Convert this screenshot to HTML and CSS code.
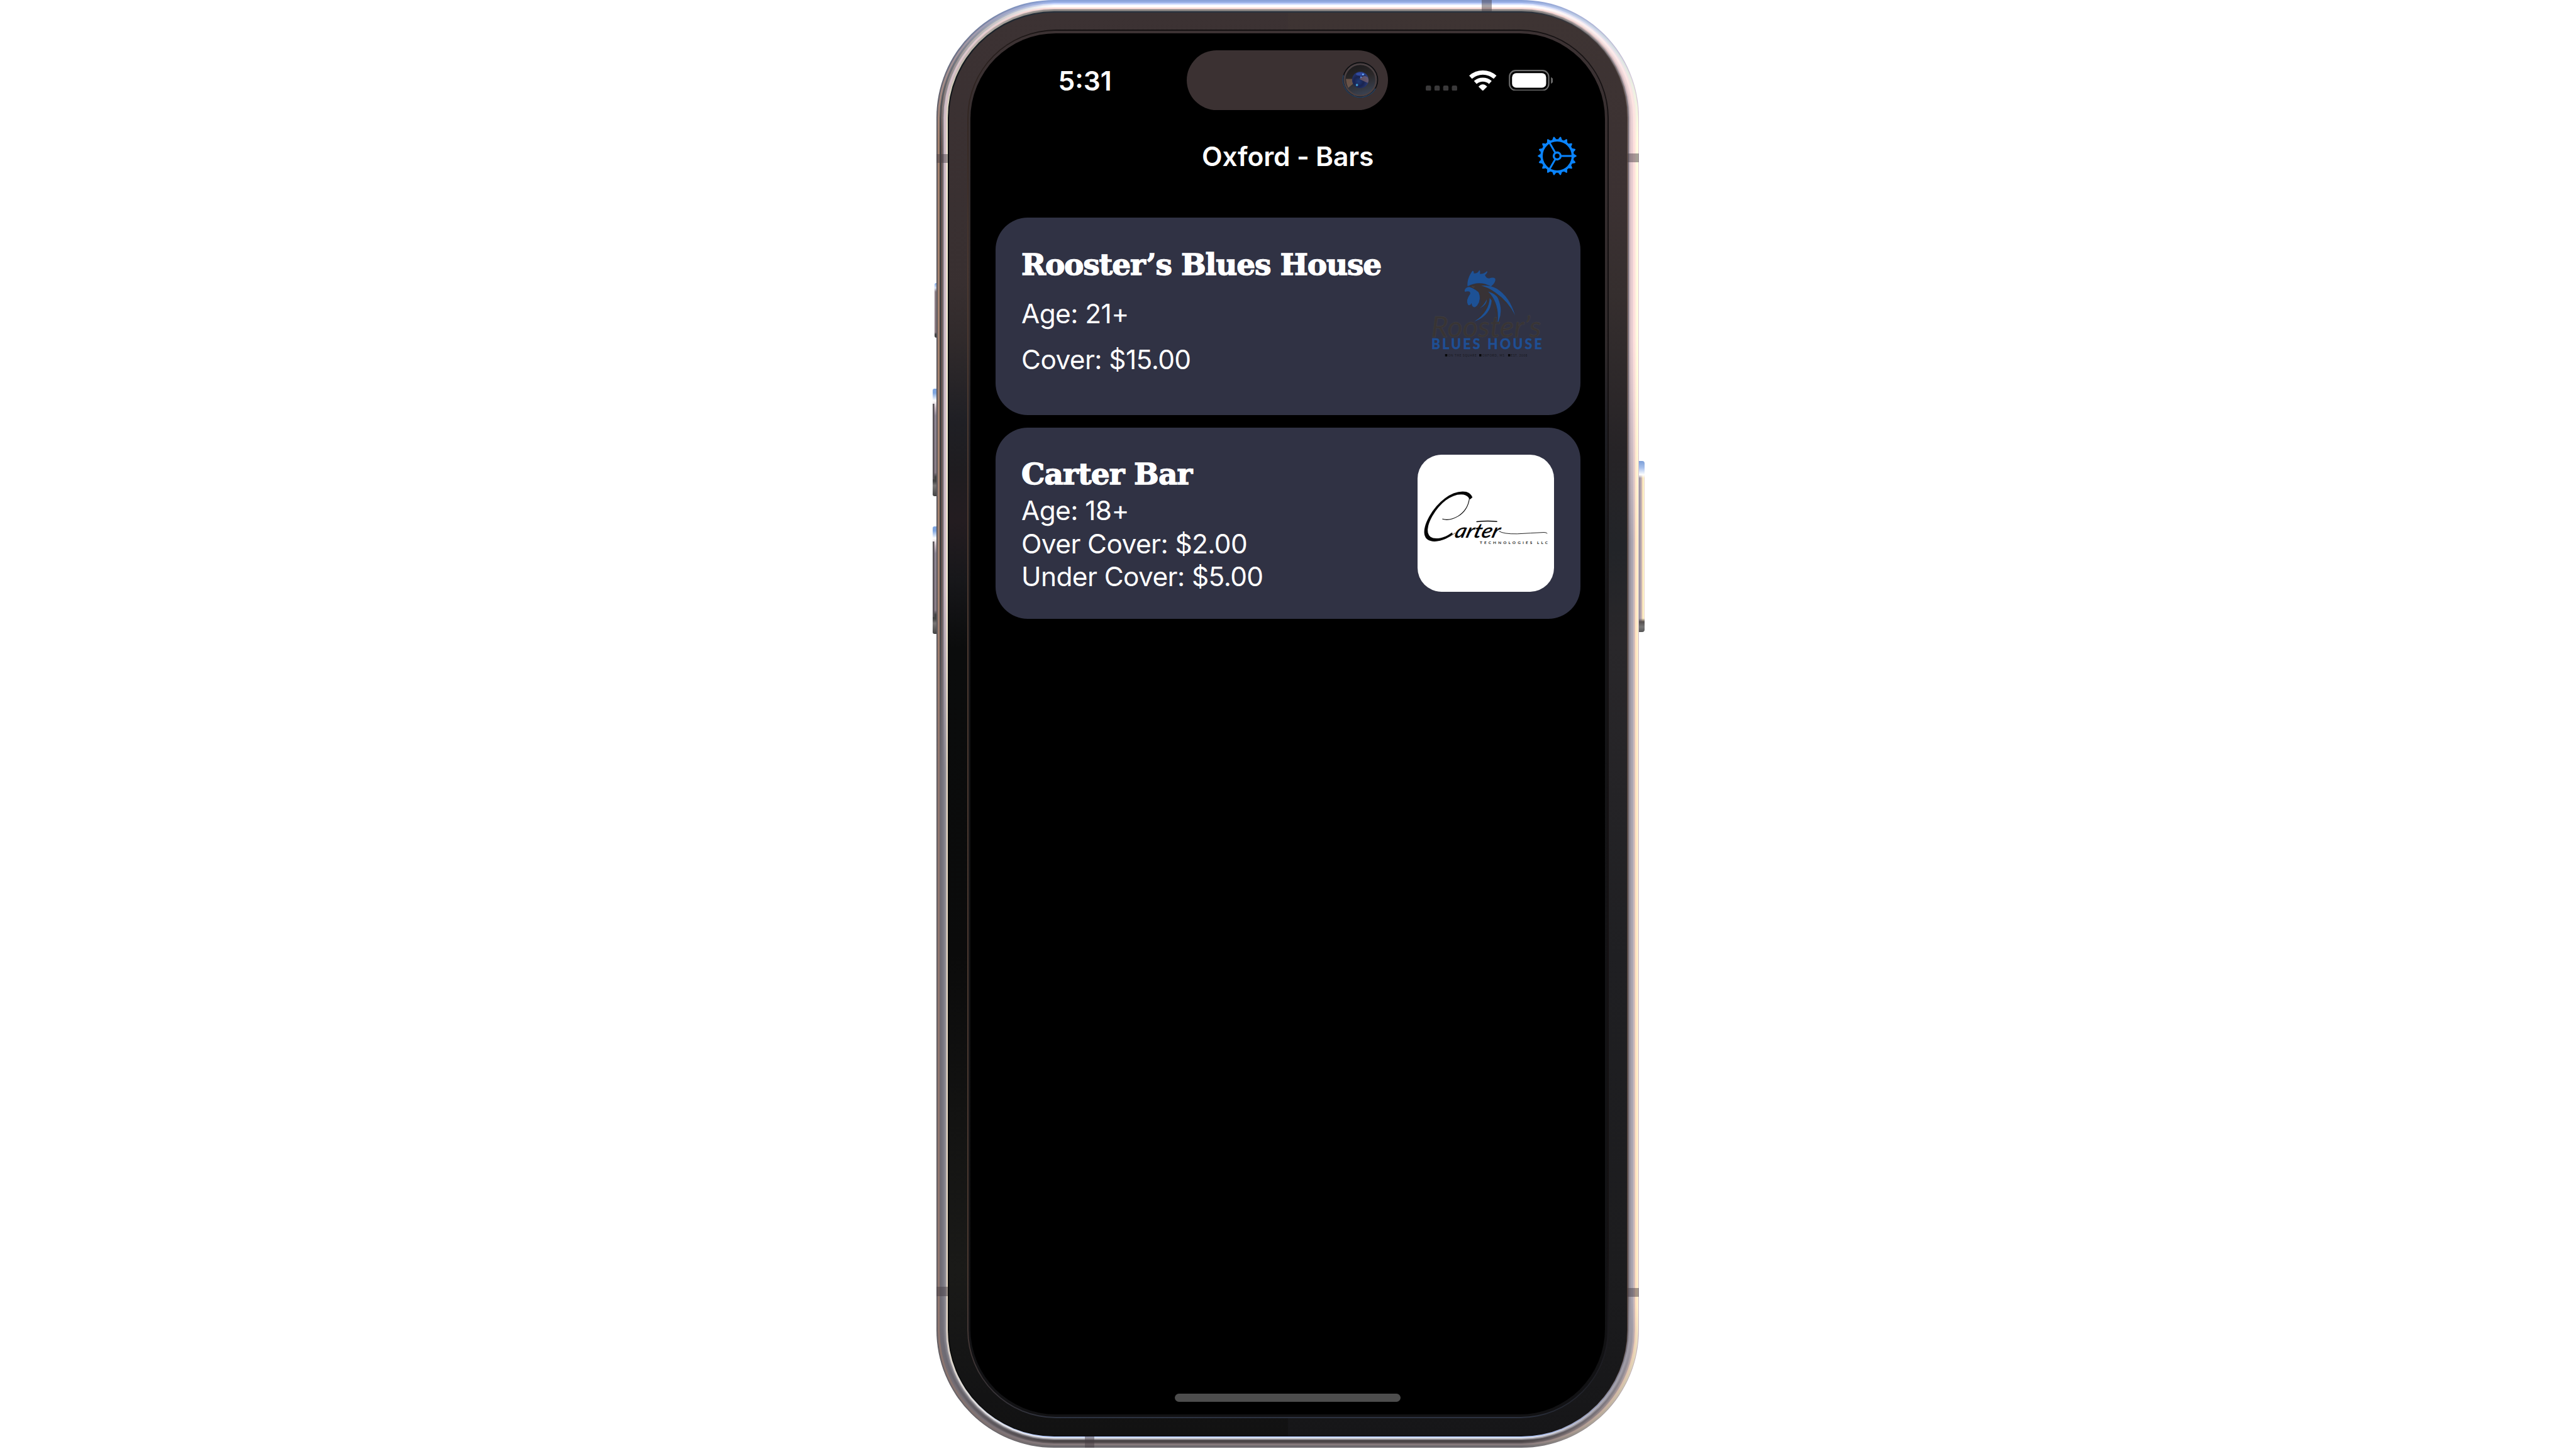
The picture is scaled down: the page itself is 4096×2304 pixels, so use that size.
FILE: index.html
```html
<!DOCTYPE html>
<html lang="en">
<head>
<meta charset="utf-8">
<title>Oxford - Bars</title>
<link rel="stylesheet" href="styles.css">
</head>
<body>
<main class="phone">
  <div class="frame" aria-hidden="true">
    <i class="button action"></i><i class="button vol-up"></i><i class="button vol-down"></i><i class="button power"></i>
    <i class="ring r0"></i><i class="ring r1"></i><i class="ring r2"></i><i class="ring r3"></i><i class="ring r4"></i><i class="ring r5"></i><i class="ring r6"></i><i class="ring r7"></i><i class="ring r8"></i><i class="ring r9"></i><i class="ring r10"></i><i class="ring r11"></i>
    <i class="antenna a-left-top"></i><i class="antenna a-right-top"></i><i class="antenna a-left-low"></i><i class="antenna a-right-low"></i><i class="antenna a-top"></i><i class="antenna a-bottom"></i>
    <i class="ring r12"></i>
    <i class="bezel"></i><i class="seam"></i><i class="seam-inner"></i>
  </div>
  <div class="screen">
    <div class="status">
      <span class="time">5:31</span>
      <div class="island">
        <svg class="camera" viewBox="-56 -56 112 112">
          <defs>
            <linearGradient id="cone" x1=".3" y1="0" x2=".6" y2="1"><stop offset="0" stop-color="#1b1a1c"/><stop offset=".45" stop-color="#2b2829"/><stop offset="1" stop-color="#3a4354"/></linearGradient>
            <radialGradient id="lens" cx=".4" cy=".6" r=".65"><stop offset="0" stop-color="#1f3a78"/><stop offset=".45" stop-color="#1a2450"/><stop offset="1" stop-color="#2a3f80"/></radialGradient>
          </defs>
          <circle r="53" fill="#0e0f12"/>
          <path d="M-50 -14A52 52 0 0 0 45 26" fill="none" stroke="#26405f" stroke-width="3"/>
          <circle r="47" fill="url(#cone)" stroke="#4a4042" stroke-width="5"/>
          <path d="M-43 -3H-22L-22 12L-36 24Q-42 12 -43 -3Z" fill="#8a6a58" opacity=".65"/>
          <circle r="24.500" fill="url(#lens)"/>
          <path d="M-3 -3Q12 -16 22 -8Q27 4 22 9Q8 3 -3 -3Z" fill="#8f6f72" opacity=".6"/>
          <ellipse cy="-17" rx="13" ry="5" fill="#3049a0"/>
          <circle cx="8" cy="-16" r="2.500" fill="#6fb4ff"/><circle cx="2" cy="-8" r="2.500" fill="#5b84d8"/><circle cx="-10" cy="15" r="3.500" fill="#3f9bd0"/>
        </svg>
      </div>
      <div class="indicators">
        <svg class="dots" viewBox="0 0 94 16" fill="#3a393a"><rect width="16" height="16" rx="4.500"/><rect x="26" width="16" height="16" rx="4.500"/><rect x="52" width="16" height="16" rx="4.500"/><rect x="78" width="16" height="16" rx="4.500"/></svg>
        <svg class="wifi" viewBox="0 0 183 137"><path d="M9.500 45.400A123 123 0 0 1 173.500 45.400" fill="none" stroke="#fff" stroke-width="28"/><path d="M41.100 80.800A75.500 75.500 0 0 1 141.900 80.800" fill="none" stroke="#fff" stroke-width="27"/><path d="M91.500 136L63.500 108Q91.500 80 119.500 108Z" fill="#fff" stroke="#fff" stroke-width="2" stroke-linejoin="round"/></svg>
        <svg class="battery" viewBox="0 0 297 142"><rect x="5" y="5" width="262" height="132" rx="42" fill="none" stroke="#6b6b6b" stroke-width="9"/><rect x="22" y="22" width="228" height="98" rx="28" fill="#fff"/><path d="M282 49Q297 55 297 71T282 93Z" fill="#6b6b6b"/></svg>
      </div>
    </div>
    <header class="navbar">
      <h1 class="nav-title">Oxford - Bars</h1>
      <svg class="gear" viewBox="-58 -58 116 116">
        <defs><path id="tooth" d="M46 -6.500Q51 -6 57 -1.600Q58.500 0 57 1.600Q51 6 46 6.500Z"/></defs>
        <g fill="#0a84ff">
          <use href="#tooth"/><use href="#tooth" transform="rotate(20)"/><use href="#tooth" transform="rotate(40)"/><use href="#tooth" transform="rotate(60)"/><use href="#tooth" transform="rotate(80)"/><use href="#tooth" transform="rotate(100)"/><use href="#tooth" transform="rotate(120)"/><use href="#tooth" transform="rotate(140)"/><use href="#tooth" transform="rotate(160)"/><use href="#tooth" transform="rotate(180)"/><use href="#tooth" transform="rotate(200)"/><use href="#tooth" transform="rotate(220)"/><use href="#tooth" transform="rotate(240)"/><use href="#tooth" transform="rotate(260)"/><use href="#tooth" transform="rotate(280)"/><use href="#tooth" transform="rotate(300)"/><use href="#tooth" transform="rotate(320)"/><use href="#tooth" transform="rotate(340)"/>
        </g>
        <g fill="none" stroke="#0a84ff"><circle r="46.500" stroke-width="7"/><circle r="10.200" stroke-width="6.400"/><path d="M12 0H46M-6 10.400L-23 39.800M-6 -10.400L-23 -39.800" stroke-width="5.600"/></g>
      </svg>
    </header>
    <section class="bars">
      <article class="card card-rooster">
        <div class="info">
          <h2 class="name">Rooster’s Blues House</h2>
          <p class="line">Age: 21+</p>
          <p class="line">Cover: $15.00</p>
        </div>
        <svg class="logo" viewBox="172.500 253 1063.600 1029" preserveAspectRatio="none">
          <path fill="#383235" d="M568 547Q620 512 690 524L745 545Q870 600 933 762Q860 650 722 582Q795 660 798 815Q780 700 730 628L728 665Q705 750 615 806Q690 745 712 640Q690 700 633 714Q682 680 664 640Q665 580 610 560Z"/>
          <g fill="#1d5195">
            <path d="M562 542C558 500 575 460 600 427Q612 424 611 446Q642 448 654 421Q664 430 658 449Q688 452 714 428Q722 440 698 458Q705 482 730 484Q762 472 778 485Q785 512 745 544Q655 495 564 542Z"/>
            <path d="M540 582Q538 550 575 547Q618 560 648 588Q672 640 637 687Q614 711 598 690L592 668Q586 691 566 682Q545 650 583 600Q586 578 560 581Q548 585 540 582Z"/>
            <path d="M668 538Q730 530 790 560Q890 620 933 762Q880 655 780 590Q725 550 668 538Z"/>
            <path d="M722 582Q780 600 798 630Q845 730 796 820Q815 670 722 582Z"/>
            <path d="M735 630L750 650Q740 765 612 808Q730 740 735 630Z"/>
            <path d="M712 640Q716 680 655 710Q695 680 712 640Z"/>
          </g>
          <path d="M598 541Q600 553 616 546" fill="none" stroke="#5a5556" stroke-width="3"/>
          <text class="rooster-script" x="278" y="925" textLength="858" lengthAdjust="spacingAndGlyphs">Rooster’s</text>
          <text class="rooster-sub" x="280" y="1017" textLength="862">BLUES HOUSE</text>
          <g fill="#08080a"><path d="M387 1053h17v17h-17zM653 1053h17v17h-17zM878 1053h17v17h-17z"/></g>
          <g class="rooster-tag"><text x="411" y="1070" textLength="220">ON THE SQUARE</text><text x="677" y="1070" textLength="172">OXFORD, MS</text><text x="901" y="1070" textLength="126">EST. 2008</text></g>
        </svg>
      </article>
      <article class="card card-carter">
        <div class="info">
          <h2 class="name">Carter Bar</h2>
          <p class="line">Age: 18+</p>
          <p class="line">Over Cover: $2.00</p>
          <p class="line">Under Cover: $5.00</p>
        </div>
        <svg class="logo logo-white" viewBox="138 103 1222 1227" preserveAspectRatio="none">
          <text class="carter-cap" transform="translate(92 874) skewX(-29)" textLength="345" lengthAdjust="spacingAndGlyphs">C</text>
          <text class="carter-script" transform="translate(462 850) skewX(-16)" textLength="400" lengthAdjust="spacingAndGlyphs">arter</text>
          <g fill="none" stroke="#050505" stroke-linecap="round">
            <path d="M290 878Q380 875 475 805" stroke-width="4"/>
            <path d="M603 490Q590 600 500 655Q420 700 362 680" stroke-width="6"/>
            <path d="M870 790Q905 815 1030 813Q1150 806 1270 800Q1290 800 1298 808" stroke-width="5"/>
            <path d="M668 704Q760 694 848 702" stroke-width="8"/>
          </g>
          <text class="carter-sub" x="696" y="905" textLength="608">TECHNOLOGIES LLC</text>
        </svg>
      </article>
    </section>
    <div class="home"></div>
  </div>
</main>
</body>
</html>
```
FILE: styles.css
```css
* { box-sizing: border-box; margin: 0; padding: 0; }
html, body { width: 4096px; height: 2304px; overflow: hidden; background: #fff; }
body { display: flex; justify-content: center; padding-right: 1px; font-family: "Inter", "Liberation Sans", sans-serif; color: #fff; }

.phone { position: relative; width: 1117px; height: 2302px; padding: 52.5px 54px 53px; }
.frame { position: absolute; inset: 0; }
.frame i { position: absolute; display: block; }

/* metal edge: concentric bands, one colour per side, blended round the corners */
.ring {
  inset: var(--d);
  border-radius: calc(187px - var(--d));
  background: conic-gradient(var(--t) 0deg 18deg, var(--ru) 31deg 42deg, var(--rl) 62deg 149deg, var(--b) 162deg 198deg, var(--ll) 211deg 262deg, var(--lu) 292deg 329deg, var(--t) 342deg 360deg);
}
.r0 { --d: 0px; --t: #8aa2d8; --ru: #e2cbd6; --rl: #d0bcc6; --b: #6b696d; --ll: #625d62; --lu: #5d585c; }
.r1 { --d: 1.5px; --t: #90a8dd; --ru: #ffffe0; --rl: #ffeecb; --b: #6f6b6f; --ll: #8c7570; --lu: #a5826f; }
.r2 { --d: 3px; --t: #a0b5ea; --ru: #ffffe0; --rl: #ffeec4; --b: #756f72; --ll: #93786f; --lu: #a5826f; }
.r3 { --d: 4.500px; --t: #c0cffa; --ru: #ffefe0; --rl: #ffe0c0; --b: #86797b; --ll: #706a70; --lu: #454443; }
.r4 { --d: 6px; --t: #dde6ff; --ru: #ffe4dc; --rl: #e8c6ba; --b: #7d7275; --ll: #6e6b74; --lu: #404040; }
.r5 { --d: 7.500px; --t: #ffffff; --ru: #ffdfdc; --rl: #c8b8ba; --b: #5a5254; --ll: #73707a; --lu: #80605a; }
.r6 { --d: 9px; --t: #ffffff; --ru: #f2d5d6; --rl: #b4aeb6; --b: #4a4345; --ll: #76747e; --lu: #6a6568; }
.r7 { --d: 10.500px; --t: #fff4f2; --ru: #e8cdd0; --rl: #aaa4b0; --b: #4c4648; --ll: #7d7b85; --lu: #a89aa4; }
.r8 { --d: 12px; --t: #ffdfda; --ru: #e4c8cd; --rl: #a5a0aa; --b: #666366; --ll: #85838c; --lu: #cbb8c4; }
.r9 { --d: 13.500px; --t: #c8b5b2; --ru: #d6bec4; --rl: #9a95a0; --b: #aaa8b0; --ll: #8b8890; --lu: #d0bcc6; }
.r10 { --d: 15px; --t: #8a8684; --ru: #b0a0a8; --rl: #8a848e; --b: #ffffff; --ll: #c5bab4; --lu: #e8d8d0; }
.r11 { --d: 16.500px; --t: #777473; --ru: #7a7078; --rl: #6f6568; --b: #b4c8f8; --ll: #fff0cf; --lu: #ffffd8; }
.r12 { --d: 18px; --t: #27313d; --ru: #5a4538; --rl: #4a382e; --b: #0a0a0a; --ll: #0a0b0b; --lu: #0c0d10; }

.bezel {
  inset: 19.500px;
  border-radius: 167.5px;
  background:
    linear-gradient(#3c3233 0, #382f30 430px, #302a2b 520px, #1f1f24 650px, #1e1c1f 730px, #231c20 810px, #17171a 900px, #0b0c0c 1010px, #0b0b0b 1500px, #1a1a18 2000px, #131314 2200px, #121212) left / 50% 100% no-repeat,
    linear-gradient(#3e3433 0, #3b3132 300px, #352e2e 450px, #262326 700px, #222428 850px, #29272a 1000px, #1f1f22 1500px, #1c1c1e 2000px, #161618) right / 50% 100% no-repeat;
}
.seam { inset: 47px 48.500px; border-radius: 141px; background: conic-gradient(#151112 0deg 149deg, #2c3240 162deg 198deg, #4a3830 211deg 325deg, #151112 342deg); }
.seam-inner {
  inset: 49px 50.500px;
  border-radius: 138px;
  background: linear-gradient(#3c3233 0, #302a2b 500px, #1f1f24 630px, #141416 900px, #121214);
}

.button { border-radius: 3px 0 0 3px; }
.button.action { left: -3.500px; top: 449.5px; width: 5px; height: 87px; background: linear-gradient(#7fa5de, #d6dff2 9%, #8c7f86 16%, #8a7a80 90%, #444 94%); }
.button.vol-up, .button.vol-down { left: -6.500px; width: 9px; height: 171px; background: linear-gradient(90deg, #5a5459 0 2px, transparent 3.500px) 0 24px / 100% 120px no-repeat, linear-gradient(#7fa5de 0 4%, #fff 11%, #c8b8c0 18%, #8e8694 25%, #8a7d87 78%, #444 82% 86%, #7a7675 90%, #444); }
.button.vol-up { top: 617.5px; }
.button.vol-down { top: 837px; }
.button.power { right: -8.500px; top: 732.5px; width: 11px; height: 272px; border-radius: 0 4px 4px 0; background: linear-gradient(#7b9fd8 0, #a9c1ec 4%, #fff 8%, transparent 10% 92%, #55504f 94%, #777 97%, #555), linear-gradient(90deg, #9a94a0 0 3px, #c4b0b4 6px, #ffe4b8 8px, #ffffc8 9px, #e8c8cc 11px); }

.antenna { background: rgba(70, 60, 66, .48); }
.a-left-top { left: 0; top: 245px; width: 18px; height: 14px; }
.a-right-top { right: 0; top: 244px; width: 18px; height: 14px; }
.a-left-low { left: 0; top: 2046px; width: 18px; height: 15px; }
.a-right-low { right: 0; top: 2047.5px; width: 18px; height: 14.5px; }
.a-top { left: 867px; top: 0; width: 15.5px; height: 18px; }
.a-bottom { left: 235.5px; bottom: 0; width: 15px; height: 18px; }

.screen { position: relative; display: flex; flex-direction: column; width: 1009px; height: 2196.5px; padding-top: 27px; border-radius: 136px; background: #000; overflow: hidden; }

.status { display: grid; grid-template-columns: 344px 320px 1fr; height: 95px; align-items: center; }
.time { padding: 4px 0 0 139.500px; font-size: 42.500px; font-weight: 600; line-height: 50px; }
.island { display: flex; justify-content: flex-end; align-items: center; height: 95px; padding-right: 14px; border-radius: 48px; background: #3b3132; }
.camera { width: 60px; height: 60px; }
.indicators { display: flex; align-items: flex-end; padding: 1px 0 0 60px; }
.dots { width: 50px; height: 8.5px; }
.wifi { width: 43.600px; height: 32.600px; margin-left: 19px; }
.battery { width: 70.700px; height: 33.800px; margin-left: 19px; }

.navbar { display: grid; grid-template-columns: 1fr auto 1fr; align-items: center; height: 147.5px; padding: 0 45.5px; }
.nav-title { grid-column: 2; font-size: 42.500px; font-weight: 600; line-height: 52px; letter-spacing: -.15px; padding-top: 1px; }
.gear { justify-self: end; width: 62px; height: 62px; }

.bars { display: flex; flex-direction: column; gap: 20.500px; padding: 24px 39px 0 39.500px; }
.card { display: flex; justify-content: space-between; align-items: center; padding: 0 42px 0 41.500px; border-radius: 51px; background: #303244; }
.card-rooster { height: 313.500px; }
.card-carter { height: 304px; }
.info { align-self: flex-start; }
.card-rooster .info { padding-top: 46.500px; }
.card-carter .info { padding-top: 46px; }
.name { font-family: "DejaVu Serif", serif; font-size: 47px; font-weight: 700; line-height: 56px; letter-spacing: -1.15px; white-space: nowrap; -webkit-text-stroke: 1.4px #fff; }
.line { font-size: 42.400px; line-height: 52.600px; letter-spacing: -.58px; white-space: nowrap; }
.card-rooster .line { margin-top: 20px; }
.card-rooster .name { margin-bottom: 24.500px; }
.card-rooster .name + .line { margin-top: 0; }
.card-carter .name { margin-bottom: 4px; letter-spacing: -.9px; }

.logo { width: 217px; height: 217.500px; overflow: visible; }
.logo-white { border-radius: 38px; background: #fff; }
.rooster-script { font: italic 400 222px "Lato", sans-serif; fill: #383434; stroke: #434246; stroke-width: 2px; }
.rooster-sub { font: 700 104px "Lato", sans-serif; fill: #1f4f94; stroke: #1f4f94; stroke-width: 3px; }
.rooster-tag { font: 400 22px "Lato", sans-serif; fill: #17171c; }
.carter-cap { font: 300 620px "Lato", sans-serif; fill: #050505; }
.carter-script { font: italic 600 180px "Lato", sans-serif; fill: #050505; }
.carter-sub { font: 700 36px "Lato", sans-serif; fill: #222; }

.home { align-self: center; width: 359px; height: 13px; margin: auto 0 20px; border-radius: 7px; background: #4d4d4d; }
```
